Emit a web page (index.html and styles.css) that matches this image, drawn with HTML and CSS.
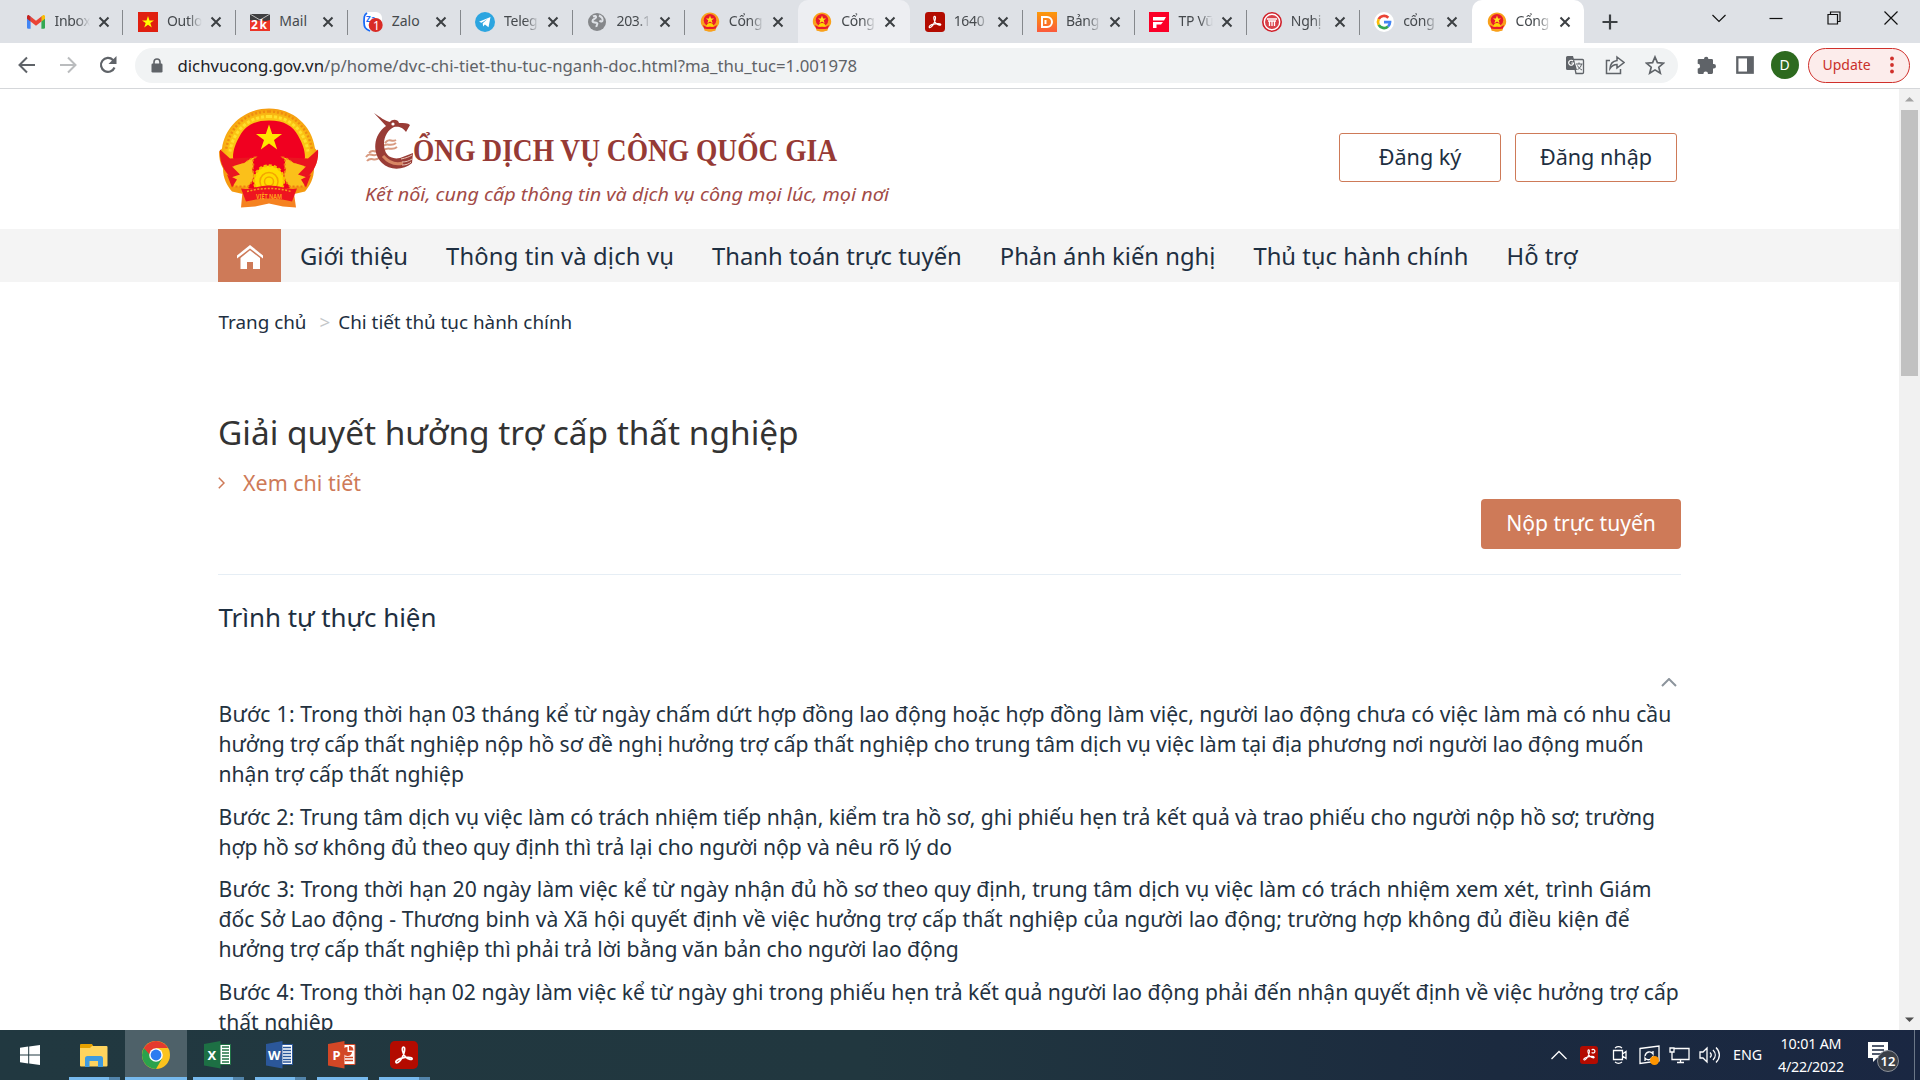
FILE: index.html
```html
<!DOCTYPE html>
<html lang="vi">
<head>
<meta charset="utf-8">
<title>Cổng Dịch vụ công Quốc gia</title>
<link rel="stylesheet" href="styles.css">
</head>
<body>
<svg class="defs" aria-hidden="true">
  <defs>
    <symbol id="x" viewBox="0 0 12 12"><path d="M1.5 1.500l9 9M10.500 1.500l-9 9" fill="none" stroke="#3c4043" stroke-width="2"/></symbol>
    <symbol id="mini-emblem" viewBox="0 0 20 20"><path d="M10 .4c5 0 9.200 4 9.200 9 0 2.800-1.200 4.600-3 6.200l-.8 3.200-1.800.3-2.400.7H8.800l-2.400-.7-1.800-.3-.8-3.200c-1.800-1.600-3-3.400-3-6.200 0-5 4.200-9 9.200-9z" fill="#f9a11b"/><circle cx="10" cy="8.200" r="6.200" fill="#e8192c"/><path d="M10 3.600l1.100 2.900h3l-2.400 1.800.9 2.900-2.600-1.700-2.600 1.700.9-2.900-2.400-1.800h3z" fill="#ffe21a"/><path d="M6.500 14.500a3.500 3.500 0 0 1 7 0z" fill="#ffd400"/><path d="M3 13l3.500 2h7L17 13l-1 3.500-3 .5H7l-3-.5z" fill="#e8192c"/></symbol>
    <symbol id="acro" viewBox="0 0 20 20"><rect width="20" height="20" rx="3.400" fill="#b30b00"/><path d="M4.300 15.300c-.7-1 1.700-2.500 4.200-3.100 2.900-.8 6.900-.9 7.300.3.300 1.200-2.700.8-4.800-1.200C9 9.300 8 4.400 9.600 4.300c1.700-.1.700 4.700-1 7.700-1.200 2.200-3.600 4.300-4.300 3.300z" fill="none" stroke="#fff" stroke-width="1.200"/></symbol>
    <radialGradient id="gold" cx=".5" cy=".5" r=".5"><stop offset=".8" stop-color="#fbc514"/><stop offset="1" stop-color="#f59a10"/></radialGradient>
  </defs>
</svg>

<header class="tabs">
  <div class="tab"><svg class="fav" viewBox="0 0 20 20"><path d="M1 4.500h3.600v12.300H2.200A1.200 1.200 0 0 1 1 15.600z" fill="#4285f4"/><path d="M15.400 4.500H19v11.100a1.200 1.200 0 0 1-1.200 1.200h-2.400z" fill="#34a853"/><path d="M15.400 4.300 17 3.200c1-.5 2 .2 2 1.500v2L15.400 9.500z" fill="#fbbc04"/><path d="M4.600 4.500 10 8.700l5.400-4.200v5L10 13.700 4.600 9.500z" fill="#ea4335"/><path d="M1 6.700v-2c0-1.300 1.200-2 2-1.500l1.600 1.200v5.100z" fill="#c5221f"/></svg><span class="t">Inbox</span><svg class="c"><use href="#x"/></svg></div>
  <div class="tab"><svg class="fav" viewBox="0 0 20 20"><rect width="20" height="20" fill="#e01f10"/><path d="M10 4l1.500 4.400H16l-3.700 2.700 1.500 4.500-3.800-2.800-3.800 2.800 1.500-4.500L4 8.400h4.500z" fill="#ff0"/></svg><span class="t">Outlo</span><svg class="c"><use href="#x"/></svg></div>
  <div class="tab"><svg class="fav" viewBox="0 0 20 20"><rect y="2" width="20" height="17" fill="#ec3527"/><path d="M0 2h20v6l-4 1L0 8z" fill="#3e3e40"/><path d="M0 2l10 6L20 2" fill="none" stroke="#bbb"/><text x="1" y="17" font-size="12" font-weight="700" fill="#fff" textLength="16">2k</text></svg><span class="t whole">Mail</span><svg class="c"><use href="#x"/></svg></div>
  <div class="tab"><svg class="fav" viewBox="0 0 20 20"><rect y="0" width="19" height="18" rx="6" fill="#fff"/><path d="M4 1C1 3 1 5 1 10s1 7 6 9" fill="none" stroke="#1769f5" stroke-width="1.800"/><text x="3" y="10" font-size="8" font-weight="700" fill="#1769f5">Za</text><circle cx="12.700" cy="13" r="7" fill="#d92b25"/><text x="10" y="17.500" font-size="12" fill="#fff">1</text></svg><span class="t whole">Zalo</span><svg class="c"><use href="#x"/></svg></div>
  <div class="tab"><svg class="fav" viewBox="0 0 20 20"><circle cx="10" cy="10" r="10" fill="#2ca5e0"/><path d="M4 9.800 15.500 5l-2 10.300-3.600-2.700-1.800 1.800-.4-3.200 4.800-4.300-6 3.800z" fill="#fff"/></svg><span class="t">Teleg</span><svg class="c"><use href="#x"/></svg></div>
  <div class="tab"><svg class="fav" viewBox="0 0 20 20"><circle cx="10" cy="10" r="9" fill="#85878a"/><path d="M6 4.500c2-1 3.500-.5 3 1S5.500 7 5.500 9s3 1 4.500 2-1 2-.5 4M12 3.500c2 1 4 3 3.500 5s-2.500.5-3 0" fill="none" stroke="#dee1e6" stroke-width="2"/></svg><span class="t">203.1</span><svg class="c"><use href="#x"/></svg></div>
  <div class="tab quiet"><svg class="fav"><use href="#mini-emblem"/></svg><span class="t">Cổng</span><svg class="c"><use href="#x"/></svg></div>
  <div class="tab hover"><svg class="fav"><use href="#mini-emblem"/></svg><span class="t">Cổng</span><svg class="c"><use href="#x"/></svg></div>
  <div class="tab"><svg class="fav"><use href="#acro"/></svg><span class="t">1640</span><svg class="c"><use href="#x"/></svg></div>
  <div class="tab"><svg class="fav" viewBox="0 0 20 20"><linearGradient id="og" x2="0" y2="1"><stop stop-color="#fb9a09"/><stop offset="1" stop-color="#fb5a3c"/></linearGradient><rect width="20" height="20" fill="url(#og)"/><path d="M5 5h5a5 5 0 0 1 0 10H5zM8.500 8v4" fill="none" stroke="#fff" stroke-width="2"/></svg><span class="t">Bảng</span><svg class="c"><use href="#x"/></svg></div>
  <div class="tab"><svg class="fav" viewBox="0 0 20 20"><rect width="20" height="20" fill="#fb0028"/><path d="M4 5h13l-2 3.500H4zM4 10h10l-2 2.500H7.500V16H4z" fill="#fff"/></svg><span class="t">TP Vũ</span><svg class="c"><use href="#x"/></svg></div>
  <div class="tab"><svg class="fav" viewBox="0 0 20 20"><circle cx="10" cy="10" r="9.200" fill="#fff" stroke="#d0202a" stroke-width="1.600"/><circle cx="10" cy="10" r="7" fill="#d94149"/><path d="M5 7h10M6 9h8M7.500 9v5M10 9v5M12.500 9v5" stroke="#fff" stroke-width="1.300"/></svg><span class="t">Nghị</span><svg class="c"><use href="#x"/></svg></div>
  <div class="tab quiet"><svg class="fav" viewBox="0 0 20 20"><circle cx="10" cy="10" r="10" fill="#fff"/><g fill="none" stroke-width="2.700"><path d="M14.300 5.700A6 6 0 0 0 4.700 7.200" stroke="#ea4335"/><path d="M4.700 7.200a6 6 0 0 0 0 5.600" stroke="#fbbc05"/><path d="M4.700 12.800a6 6 0 0 0 9.300 1.700" stroke="#34a853"/><path d="M14 14.500a6 6 0 0 0 2-4.300h-6" stroke="#4285f4"/></g></svg><span class="t">cổng</span><svg class="c"><use href="#x"/></svg></div>
  <div class="tab active"><svg class="fav"><use href="#mini-emblem"/></svg><span class="t">Cổng</span><svg class="c"><use href="#x"/></svg></div>
  <svg class="plus" viewBox="0 0 16 16"><path d="M8 .5v15M.5 8h15" stroke="#3c4043" stroke-width="2.200"/></svg>
  <div class="win">
    <svg viewBox="0 0 14 14"><path d="M.5 4 7 10.500 13.500 4" /></svg>
    <svg viewBox="0 0 14 14"><path d="M.5 7.500h13" /></svg>
    <svg viewBox="0 0 14 14"><path d="M1 3.500h9.500V13H1zM3.500 3.500V1H13v9.500h-2.500" /></svg>
    <svg viewBox="0 0 14 14"><path d="M.5.5l13 13M13.500.5l-13 13" /></svg>
  </div>
</header>

<div class="toolbar">
  <svg class="nav-i" viewBox="0 0 18 18"><path d="M17 9H2M9 1.500 1.500 9 9 16.500" fill="none" stroke="#5f6368" stroke-width="2"/></svg>
  <svg class="nav-i" viewBox="0 0 18 18"><path d="M1 9h15M9 1.500 16.500 9 9 16.500" fill="none" stroke="#babcbe" stroke-width="2"/></svg>
  <svg class="nav-i" viewBox="0 0 18 18"><path d="M15.500 11.500A7 7 0 1 1 14 4l2 2" fill="none" stroke="#5f6368" stroke-width="2.200"/><path d="M17.500 0v8h-8z" fill="#5f6368"/></svg>
  <div class="omni">
    <svg class="lock" viewBox="0 0 12 15"><path d="M3 6V4a3 3 0 0 1 6 0v2" fill="none" stroke="#5f6368" stroke-width="1.600"/><rect x=".5" y="5.500" width="11" height="9" rx="1.200" fill="#5f6368"/></svg>
    <span class="url"><b>dichvucong.gov.vn</b>/p/home/dvc-chi-tiet-thu-tuc-nganh-doc.html?ma_thu_tuc=1.001978</span>
    <div class="omni-i">
      <svg viewBox="0 0 20 20"><path d="M8 4.500h9.500a1 1 0 0 1 1 1v12a1 1 0 0 1-1 1H11z" fill="#f1f3f4" stroke="#5f6368" stroke-width="1.300"/><path d="M2.500 1H8l4 14H2.500A1.500 1.500 0 0 1 1 13.500v-11A1.500 1.500 0 0 1 2.500 1z" fill="#5f6368"/><path d="M8 6a2.500 2.500 0 1 0 .7 2H6.300" fill="none" stroke="#fff" stroke-width="1.200"/><path d="M11 9h6.500M14 7.500V9m2.500 0c-.5 3-2 4.500-4 5.500m0-4c1 2 2.500 3.500 4.500 4.500" fill="none" stroke="#5f6368"/></svg>
      <svg viewBox="0 0 20 20"><path d="M5 5.500H1.500v13h14V14M12 2l7 5.500-7 5.500v-3.500c-3 0-5 1-7 4 .3-4.500 3-7.500 7-8z" fill="none" stroke="#5f6368" stroke-width="1.500"/></svg>
      <svg viewBox="0 0 20 20"><path d="M10 2l2.400 5.700 6.100.5-4.700 4 1.500 6L10 14.900l-5.300 3.300 1.500-6-4.700-4 6.100-.5z" fill="none" stroke="#5f6368" stroke-width="1.700"/></svg>
    </div>
  </div>
  <svg class="ext" viewBox="0 0 20 20"><path d="M8 4a2.200 2.200 0 0 1 4.400 0h3.300A1.300 1.300 0 0 1 17 5.300V9h.8a2.200 2.200 0 0 1 0 4.400H17v4.200a1.300 1.300 0 0 1-1.300 1.300H12a2.300 2.300 0 0 0-4.600 0H3a1.300 1.300 0 0 1-1.300-1.300v-4a2.400 2.400 0 0 0 0-4.800V5.300A1.300 1.300 0 0 1 3 4z" fill="#5f6368"/></svg>
  <svg class="side" viewBox="0 0 18 18"><rect x="1.300" y="1.300" width="15.400" height="15.400" fill="#fff" stroke="#5f6368" stroke-width="2.300"/><path d="M11 1h6v16h-6z" fill="#5f6368"/></svg>
  <span class="avatar">D</span>
  <div class="update">Update<svg viewBox="0 0 4 18"><circle cx="2" cy="2.500" r="1.900"/><circle cx="2" cy="9" r="1.900"/><circle cx="2" cy="15.500" r="1.900"/></svg></div>
</div>

<div class="viewport">
  <main class="page">
    <div class="brand">
      <svg class="emblem" viewBox="0 0 100 100">
        <path d="M24 78 50 88 74 78 77 99 64 98 50 95 36 98 22 99z" fill="#f58220"/>
        <path d="M50 0C74 0 93 17 96 40l3 3c0 6-1 12-4 17 0 10-4 17-9 23l-13 3H26l-13-3C8 77 4 70 4 60 1 55 0 49 0 43l3-3C6 17 26 0 50 0z" fill="url(#gold)"/>
        <path d="M50 3C73 3 90 19 93 42M50 3C27 3 10 19 7 42" fill="none" stroke="#f08c10" stroke-width="2.500" stroke-dasharray="2 2"/>
        <path d="M50 8C71 8 86 23 89 43M50 8C29 8 14 23 11 43" fill="none" stroke="#ffe02c" stroke-width="3" stroke-dasharray="3 2"/>
        <path d="M50 12C66 12 74 18 79 27 83 34 86 41 86 49L80 66 70 80H30L20 66 14 49C14 41 17 34 21 27 26 18 34 12 50 12z" fill="#f00020"/>
        <path d="M16 53c8 5 14-4 20-4-5 4 1 8-3 12 4 6 1 12-4 17H15C9 71 12 60 16 53zM84 53c-8 5-14-4-20-4 5 4-1 8 3 12-4 6-1 12 4 17h14c6-7 3-18-1-25z" fill="#fbc01a" stroke="#f07a12" stroke-width="1.800" stroke-dasharray="2 2"/>
        <path d="M1 41l10 9 20-1-5 5-13 4 8 8-9 3C4 62 0 52 1 41zM99 41l-10 9-20-1 5 5 13 4-8 8 9 3c8-7 12-17 11-28z" fill="#ea1420"/>
        <path d="M8 66l10 5-5 8zM92 66l-10 5 5 8z" fill="#ea1420"/>
        <path d="M50 16l3.200 9.500h9.800l-8 6 3.200 9.500-8.200-6-8.200 6 3.200-9.500-8-6h9.800z" fill="#ffe600"/>
        <circle cx="50" cy="72" r="15" fill="#ffdc00" stroke="#f9bf00" stroke-width="2.500" stroke-dasharray="3 2"/><circle cx="50" cy="73" r="9" fill="none" stroke="#f5a500" stroke-width="1.500"/><circle cx="50" cy="73" r="4.500" fill="none" stroke="#f5a500" stroke-width="1.500"/>
        <path d="M22 80c8 2 16-3 28-3s20 5 28 3l-5 13c-15-4-31-4-46 0z" fill="#ee1420"/>
        <path d="M28 83c14-4 30-4 44 0" fill="none" stroke="#f9a01b" stroke-width="1.500" stroke-dasharray="2 1.500"/>
        <text x="37" y="90" font-size="7" font-weight="700" fill="#ffa21a" textLength="26" lengthAdjust="spacingAndGlyphs">VIỆT NAM</text>
      </svg>
      <svg class="logo" viewBox="0 0 540 100">
        <g fill="none" stroke="#d89a80" stroke-width="2"><path d="M1 44c4-6 6 1 12-3M4 40c4-5 6 1 10-3M2 48c4-5 7 1 12-3M17 34c5-6 8 1 14-4M18 38c5-6 8 1 14-4M20 30c5-6 6 0 11-3"/></g>
        <path d="M9 0c6 4 11 8 16 9 2-3 8-3 9 1 5 0 9 0 11 2l-4 7c-3-5-8-6-12-5-6 3-10 9-10 17 0 10 6 16 16 14l13-5-1 10c-8 7-22 8-30 0-10-10-9-28 4-37z" fill="#993c36"/>
        <circle cx="28" cy="11" r="1.600" fill="#fff"/>
        <path d="M18 43c6 7 13 9 20 7" fill="none" stroke="#d78765" stroke-width="3"/>
        <path d="M36 46c5-1 8-2 11-4M37 49c4 0 7-1 10-3M37 52c4 0 7-1 9-3" fill="none" stroke="#e8c3b5"/>
        <text class="serif" x="48" y="47.500" textLength="424" lengthAdjust="spacingAndGlyphs">ỔNG DỊCH VỤ CÔNG QUỐC GIA</text>
        <text class="slogan" x="0" y="88" textLength="524" lengthAdjust="spacingAndGlyphs">Kết nối, cung cấp thông tin và dịch vụ công mọi lúc, mọi nơi</text>
      </svg>
      <div class="auth"><a>Đăng ký</a><a>Đăng nhập</a></div>
    </div>
    <nav class="menu">
      <span class="home"><svg viewBox="0 0 26 24"><path d="M13 0 26 10.500v3L13 3.500 0 13.500v-3z"/><path d="M13 5.300 23 13v11h-7v-7h-6v7H3.500V13z"/></svg></span>
      <a>Giới thiệu</a><a class="wide">Thông tin và dịch vụ</a><a>Thanh toán trực tuyến</a><a>Phản ánh kiến nghị</a><a>Thủ tục hành chính</a><a>Hỗ trợ</a>
    </nav>
    <div class="crumbs"><span>Trang chủ</span><i>&gt;</i><span>Chi tiết thủ tục hành chính</span></div>
    <section class="intro">
      <h1>Giải quyết hưởng trợ cấp thất nghiệp</h1>
      <a class="more"><svg viewBox="0 0 7 12"><path d="M.8.8 6 6 .8 11.200"/></svg>Xem chi tiết</a>
      <a class="submit">Nộp trực tuyến</a>
    </section>
    <section class="steps">
      <h2>Trình tự thực hiện</h2>
      <div class="fold"><svg viewBox="0 0 16 9"><path d="M1 8l7-7 7 7"/></svg></div>
      <p><span><b>Bước 1:</b> Trong thời hạn 03 tháng kể từ ngày chấm dứt hợp đồng lao động hoặc hợp đồng làm việc, người lao động chưa có việc làm mà có nhu cầu</span><br><span class="tight">hưởng trợ cấp thất nghiệp nộp hồ sơ đề nghị hưởng trợ cấp thất nghiệp cho trung tâm dịch vụ việc làm tại địa phương nơi người lao động muốn</span><br><span class="tight">nhận trợ cấp thất nghiệp</span></p>
      <p><span class="snug"><b>Bước 2:</b> Trung tâm dịch vụ việc làm có trách nhiệm tiếp nhận, kiểm tra hồ sơ, ghi phiếu hẹn trả kết quả và trao phiếu cho người nộp hồ sơ; trường</span><br><span class="snug">hợp hồ sơ không đủ theo quy định thì trả lại cho người nộp và nêu rõ lý do</span></p>
      <p><span class="loose"><b>Bước 3:</b> Trong thời hạn 20 ngày làm việc kể từ ngày nhận đủ hồ sơ theo quy định, trung tâm dịch vụ việc làm có trách nhiệm xem xét, trình Giám</span><br><span class="loose">đốc Sở Lao động - Thương binh và Xã hội quyết định về việc hưởng trợ cấp thất nghiệp của người lao động; trường hợp không đủ điều kiện để</span><br><span class="tight">hưởng trợ cấp thất nghiệp thì phải trả lời bằng văn bản cho người lao động</span></p>
      <p><span><b>Bước 4:</b> Trong thời hạn 02 ngày làm việc kể từ ngày ghi trong phiếu hẹn trả kết quả người lao động phải đến nhận quyết định về việc hưởng trợ cấp</span><br><span>thất nghiệp</span></p>
    </section>
  </main>
  <aside class="scroll">
    <svg viewBox="0 0 20 20"><path d="M5 12h9L9.500 7.500z" fill="#a3a3a3"/></svg>
    <div class="thumb"></div>
    <svg viewBox="0 0 20 20"><path d="M5 8h9l-4.500 4.500z" fill="#505050"/></svg>
  </aside>
</div>

<footer class="task">
  <div class="app start"><svg viewBox="0 0 20 20"><path d="M0 2.700 8.200 1.600v7.900H0zM9.200 1.400 20 0v9.500H9.200zM0 10.500h8.200v7.900L0 17.300zM9.200 10.500H20V20L9.200 18.600z" fill="#fff"/></svg></div>
  <div class="app multi"><svg viewBox="0 0 28 28"><path d="M0 4a1 1 0 0 1 1-1h11l1.500 2.500V8H0z" fill="#e6a100"/><path d="M0 7h10l2-2h14.500a1 1 0 0 1 1 1v18.500a1 1 0 0 1-1 1H1a1 1 0 0 1-1-1z" fill="#ffd45e"/><path d="M5 26v-8.500A2.500 2.500 0 0 1 7.500 15h13a2.500 2.500 0 0 1 2.500 2.500V26h-5v-6H9.500v6z" fill="#3f9be0"/></svg></div>
  <div class="app on"><svg viewBox="0 0 28 28"><circle cx="14" cy="14" r="14" fill="#fcc31e"/><path d="M14 14 1.900 7A14 14 0 0 0 14 28l6-10.500z" fill="#2ba24c"/><path d="M14 14H7.900L1.900 7A14 14 0 0 1 26.100 7H14z" fill="#e33b2e"/><circle cx="14" cy="14" r="6.800" fill="#fff"/><circle cx="14" cy="14" r="5.400" fill="#2d7cf0"/></svg></div>
  <div class="app multi"><svg viewBox="0 0 28 28"><path d="M14 3.500h12.500v20H14z" fill="#fff" stroke="#217346"/><path d="M18 6h7M18 9h7M18 12h7M18 15h7M18 18h7M18 21h7" stroke="#217346" stroke-width="1.700"/><path d="M0 3 16.500 0v27.500L0 24.500z" fill="#1d7044"/><text x="3.500" y="18.500" font-size="13" font-weight="700" fill="#fff">X</text></svg></div>
  <div class="app multi"><svg viewBox="0 0 28 28"><path d="M14 3.500h12.500v20H14z" fill="#fff" stroke="#2b579a"/><path d="M17 6.500h8M17 9.500h8M17 12.500h8M17 15.500h8M17 18.500h8M17 21h8" stroke="#2b579a" stroke-width="1.300"/><path d="M0 3 16.500 0v27.500L0 24.500z" fill="#2b579a"/><text x="2" y="18.500" font-size="13" font-weight="700" fill="#fff">W</text></svg></div>
  <div class="app one"><svg viewBox="0 0 28 28"><path d="M14 3.500h13v20H14z" fill="#fff" stroke="#d24726"/><path d="M17 16.500h8M17 19.500h8" stroke="#d24726" stroke-width="1.500"/><path d="M19.500 6a4.500 4.500 0 1 0 4.500 5h-4.500z" fill="#d24726"/><path d="M21 5v4.500h4.500A4.500 4.500 0 0 0 21 5z" fill="#d24726"/><path d="M0 3 16.500 0v27.500L0 24.500z" fill="#d24726"/><text x="4.500" y="18.500" font-size="13" font-weight="700" fill="#fff">P</text></svg></div>
  <div class="app multi"><svg viewBox="0 0 20 20"><use href="#acro"/></svg></div>
  <div class="tray">
    <svg class="up" viewBox="0 0 16 10"><path d="M.5 9 8 1.500 15.500 9"/></svg>
    <svg class="ac" viewBox="0 0 20 20"><use href="#acro"/><path d="M13 4.500a2 2 0 1 1 0 2.500" stroke="#fff" fill="none"/></svg>
    <svg class="cam" viewBox="0 0 16 18"><path d="M1.500 4.500h9v9h-9zM10.500 8l3.500-2.500v7L10.500 10M3 2c2-1.500 5-1.500 7 0M3 16c2 1.500 5 1.500 7 0"/></svg>
    <svg class="sync" viewBox="0 0 21 20"><path d="M1 3.500 20 1v15L1 18.500zM6 11c1-5 6-5 8-2V6M14 11c-1 4-6 5-8 2v3"/><circle cx="15.500" cy="15.500" r="4.500" fill="#ff9500" stroke="none"/></svg>
    <svg class="net" viewBox="0 0 21 18"><path d="M4.500 2.500H20v11H3V7M11.500 13.500v3M8 16.500h7M1 2h4v4H1zM3 6v4"/></svg>
    <svg class="vol" viewBox="0 0 22 18"><path d="M1 6h3l4-4v14l-4-4H1zM11 6.500c1.500 1.500 1.500 3.500 0 5M14 4c3 3 3 7 0 10M17 1.500c4.500 4.500 4.500 10.500 0 15"/></svg>
    <span class="lang">ENG</span>
    <span class="clock"><span>10:01 AM</span><span>4/22/2022</span></span>
    <svg class="note" viewBox="0 0 32 31"><path d="M0 1h20v16H9l-4 4v-4H0z" fill="#fff" stroke="none"/><path d="M4 5h12M4 9h12M4 13h9" stroke="#1a2740"/><circle cx="20" cy="20" r="10.500" fill="#3a3f47" stroke="#8b9099" stroke-width="1"/><text x="12.500" y="25" font-size="13" font-weight="600" fill="#fff" stroke="none" textLength="15">12</text></svg>
  </div>
</footer>
</body>
</html>
```
FILE: styles.css
```css
* { box-sizing: border-box; }
body {
  margin: 0;
  width: 1920px;
  height: 1080px;
  overflow: hidden;
  display: flex;
  flex-direction: column;
  background: #fff;
  color: #1e2f41;
  font-family: "Noto Sans", "Open Sans", sans-serif;
}
.defs { width: 0; height: 0; position: absolute; }
svg { display: block; flex: none; }

/* tab strip */
.tabs {
  flex: none;
  height: 43px;
  display: flex;
  align-items: stretch;
  padding-left: 11px;
  background: #dee1e6;
  font-size: 14px;
  color: #45494d;
}
.tab {
  width: 112.400px;
  display: flex;
  align-items: center;
  padding-left: 14.500px;
  background: linear-gradient(#85888c, #85888c) right 10px / 1px 25px no-repeat;
}
.tab.quiet { background: none; }
.tab .fav { width: 20px; height: 20px; }
.tab .t {
  width: 35px;
  margin: 0 8px 2px 9px;
  overflow: hidden;
  white-space: nowrap;
  letter-spacing: -.3px;
  mask-image: linear-gradient(90deg, #000 60%, transparent);
}
.tab .t.whole { mask-image: none; letter-spacing: 0; }
.tab .c { width: 12px; height: 12px; }
.tab.hover, .tab.active { border-radius: 10px 10px 0 0; }
.tab.hover { background: #edeef2; }
.tab.active { background: #fff; }
.plus { width: 16px; height: 16px; align-self: center; margin-left: 18px; }
.win { display: flex; margin: 11px 22px 0 auto; gap: 43.500px; }
.win svg { width: 14px; height: 14px; fill: none; stroke: #111; stroke-width: 1.200; }

/* address row */
.toolbar {
  flex: none;
  height: 46px;
  display: flex;
  align-items: center;
  padding: 0 10px 1px 18px;
  border-bottom: 1px solid #d5d7da;
  background: #fff;
}
.nav-i { width: 18px; height: 18px; margin-right: 22.500px; }
.omni {
  width: 1543px;
  height: 35px;
  margin-left: -4.500px;
  border-radius: 18px;
  background: #f1f3f4;
  display: flex;
  align-items: center;
  padding: 0 13px 0 16px;
}
.lock { width: 12px; height: 15px; margin-right: 14.500px; }
.url { font-size: 16.760px; color: #5f6368; white-space: nowrap; }
.url b { font-weight: 400; color: #202124; }
.omni-i { margin-left: auto; display: flex; gap: 20px; }
.omni-i svg { width: 20px; height: 20px; }
.ext { width: 20px; height: 20px; margin-left: 17.500px; }
.side { width: 18px; height: 18px; margin-left: 20px; }
.avatar {
  width: 28px;
  height: 28px;
  margin: 0 9px 0 17px;
  border-radius: 50%;
  background: #2d6a1f;
  color: #fff;
  font-size: 14px;
  line-height: 28px;
  text-align: center;
}
.update {
  width: 102px;
  height: 35px;
  border: 1.500px solid #d0302b;
  border-radius: 18px;
  background: #fceceb;
  color: #c9302a;
  font-size: 14px;
  display: flex;
  align-items: center;
  justify-content: space-between;
  padding: 0 15px 1px 14px;
}
.update svg { width: 4px; height: 18px; fill: #d0302b; }

/* page */
.viewport { flex: none; height: 941px; display: flex; overflow: hidden; }
.page { flex: 1; min-width: 0; }
.brand {
  height: 140px;
  display: flex;
  padding-left: 219px;
}
.emblem { width: 100px; height: 101px; margin-top: 19px; }
.logo { width: 540px; height: 100px; margin: 24px 0 0 46px; overflow: visible; }
.serif { font: 700 30.500px "Liberation Serif", serif; fill: #963a35; }
.slogan { font: italic 18.700px "Noto Sans", sans-serif; fill: #a24b47; }
.auth { display: flex; gap: 14px; margin: 44px 0 0 434px; }
.auth a {
  width: 162px;
  height: 49px;
  border: 1px solid #ce7a58;
  border-radius: 3px;
  font-size: 21.600px;
  line-height: 46px;
  text-align: center;
}
.menu {
  height: 53px;
  padding-left: 218px;
  background: #f4f4f4;
  display: flex;
  font-size: 23.800px;
  line-height: 55px;
  white-space: nowrap;
}
.home { width: 63px; background: #ce7a58; display: flex; align-items: center; justify-content: center; }
.home svg { width: 26px; height: 24px; fill: #fff; margin-top: 2px; }
.menu a { padding: 0 19px; }
.menu .wide { letter-spacing: .15px; }
.crumbs {
  display: flex;
  padding: 27px 0 0 218.500px;
  font-size: 18.850px;
  line-height: 26px;
}
.crumbs i { font-style: normal; color: #c4c7ca; margin: 0 8px 0 13px; }
.intro {
  width: 1463px;
  height: 240px;
  margin-left: 218px;
  display: flex;
  flex-direction: column;
  border-bottom: 1px solid #e6eef5;
}
h1 {
  margin: 72px 0 0;
  font-size: 33.400px;
  line-height: 50px;
  font-weight: 400;
  color: #333;
  white-space: nowrap;
}
.more {
  margin-top: 11px;
  display: flex;
  align-items: center;
  font-size: 21.440px;
  line-height: 30px;
  color: #ce7a58;
}
.more svg { width: 7px; height: 12px; margin-right: 18px; fill: none; stroke: #ce7a58; stroke-width: 1.500; }
.submit {
  align-self: flex-end;
  width: 200px;
  height: 50px;
  margin-top: 1px;
  border-radius: 4px;
  background: #ce7a58;
  color: #fff;
  font-size: 21.100px;
  line-height: 48px;
  text-align: center;
}
.steps { width: 1463px; margin-left: 218.500px; color: #24323f; }
h2 {
  margin: 22px 0 0;
  font-size: 25.900px;
  line-height: 40px;
  font-weight: 400;
  color: #1e2f41;
}
.fold { display: flex; justify-content: flex-end; padding: 41px 5px 0 0; }
.fold svg { width: 16px; height: 9px; fill: none; stroke: #8c949c; stroke-width: 2; }
.steps p { margin: 0 0 12.700px; font-size: 21.140px; line-height: 30px; white-space: nowrap; }
.steps p b { font-weight: 400; letter-spacing: .28px; }
.fold + p { margin-top: 12px; }
.tight { word-spacing: -.28px; }
.snug { word-spacing: -.18px; }
.loose { word-spacing: .17px; }

.scroll {
  width: 21px;
  background: #f1f1f1;
  display: flex;
  flex-direction: column;
  align-items: center;
}
.scroll svg { width: 20px; height: 21px; }
.thumb { width: 17px; height: 266px; background: #c1c1c1; margin-bottom: auto; }

/* taskbar */
.task {
  flex: none;
  height: 50px;
  display: flex;
  background: linear-gradient(90deg, #213840, #21373f 45%, #1b2a3f 78%, #1a2742);
  color: #fff;
}
.app { width: 62px; display: flex; align-items: center; justify-content: center; padding-bottom: 1px; }
.app svg { width: 28px; height: 28px; }
.app.start { width: 63px; padding-right: 3px; }
.app.start svg { width: 20px; height: 20px; }
.app.multi { background: linear-gradient(90deg, #76b9ed 40px, #5284aa 40px) 6px 100% / 51px 3px no-repeat; }
.app.one { background: linear-gradient(#76b9ed, #76b9ed) 6px 100% / 51px 3px no-repeat; }
.app.on { background: linear-gradient(#76b9ed, #76b9ed) 0 100% / 100% 3px no-repeat, #4e6169; }
.tray { margin-left: auto; display: flex; align-items: center; border-right: 1px solid #6b7788; margin-right: 5px; padding-right: 14px; }
.tray svg { fill: none; stroke: #fff; stroke-width: 1.300; }
.tray .up { width: 16px; height: 10px; margin-right: 13px; }
.tray .ac { width: 18px; height: 18px; margin-right: 14px; stroke: none; }
.tray .cam { width: 16px; height: 18px; margin-right: 11px; }
.tray .sync { width: 21px; height: 20px; margin-right: 9px; }
.tray .net { width: 21px; height: 18px; margin-right: 9px; }
.tray .vol { width: 22px; height: 18px; margin-right: 12px; }
.lang { width: 44px; font-size: 14.300px; padding-bottom: 1px; }
.clock { width: 68px; margin-right: 23px; display: flex; flex-direction: column; align-items: center; font-size: 14.300px; line-height: 23px; letter-spacing: -.2px; white-space: nowrap; }
.tray .note { width: 32px; height: 31px; margin-top: 2px; }
```
